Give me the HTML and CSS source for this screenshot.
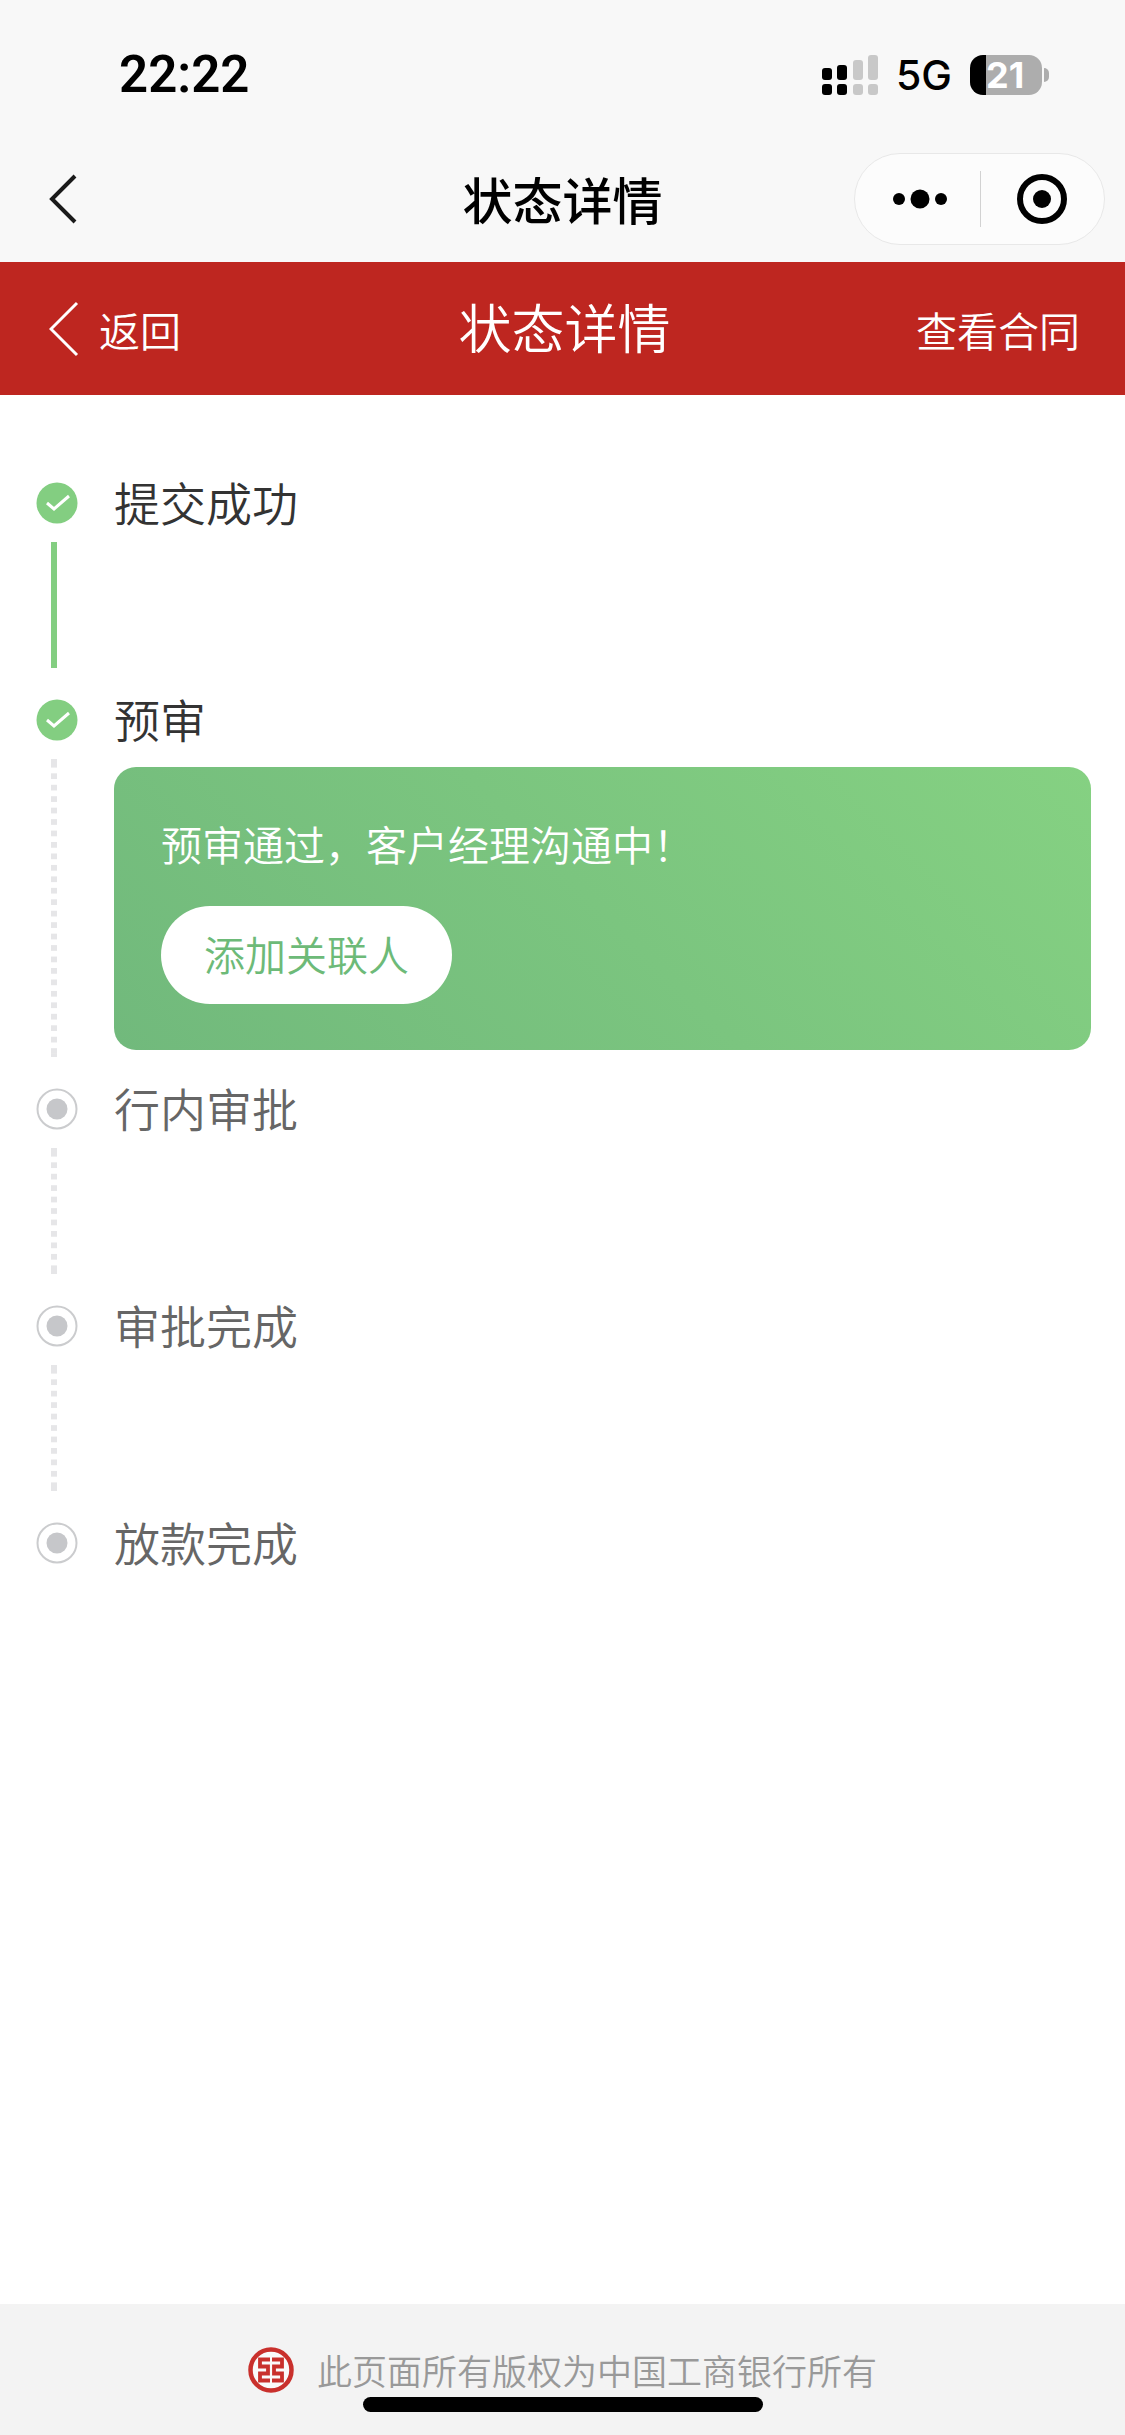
FILE: index.html
```html
<!DOCTYPE html>
<html lang="zh-CN">
<head>
<meta charset="utf-8">
<meta name="viewport" content="width=device-width, initial-scale=1">
<title>状态详情</title>
<link rel="stylesheet" href="styles.css">
</head>
<body>
<div class="status-bar">
  <time class="clock">22:22</time>
  <div class="status-icons">
    <svg class="signal" width="56" height="40" viewBox="0 0 56 40" aria-hidden="true">
      <g fill="#000"><rect y="13" width="10" height="12" rx="3"/><rect x="15" y="10" width="10" height="15" rx="3"/><rect y="29" width="10" height="11" rx="3"/><rect x="15" y="29" width="10" height="11" rx="3"/></g>
      <g fill="#c8c8c8"><rect x="31" y="5" width="10" height="20" rx="3"/><rect x="46" width="10" height="25" rx="3"/><rect x="31" y="29" width="10" height="11" rx="3"/><rect x="46" y="29" width="10" height="11" rx="3"/></g>
    </svg>
    <span class="network">5G</span>
    <div class="battery"><span class="battery-body">21</span><span class="battery-cap"></span></div>
  </div>
</div>
<header class="nav-bar">
  <button class="nav-back" type="button" aria-label="返回"><svg width="30" height="52" viewBox="0 0 30 52"><path d="M27 3 4 26l23 23" fill="none" stroke="#1a1a1a" stroke-width="4"/></svg></button>
  <div class="nav-title">状态详情</div>
  <div class="capsule">
    <button class="capsule-button" type="button" aria-label="更多"><svg width="56" height="20" viewBox="0 0 56 20"><circle cx="7" cy="10" r="6"/><circle cx="28" cy="10" r="9.5"/><circle cx="49" cy="10" r="6"/></svg></button>
    <button class="capsule-button" type="button" aria-label="关闭"><svg width="50" height="50" viewBox="0 0 50 50"><circle cx="25" cy="25" r="22" fill="none" stroke="#000" stroke-width="6"/><circle cx="25" cy="25" r="9"/></svg></button>
  </div>
</header>
<div class="page-bar">
  <a class="page-back" href="#"><svg width="30" height="56" viewBox="0 0 30 56" aria-hidden="true"><path d="M28 2 2 28l26 26" fill="none" stroke="#fff" stroke-width="3"/></svg>返回</a>
  <h1 class="page-title">状态详情</h1>
  <a class="page-link" href="#">查看合同</a>
</div>
<main class="content">
  <ol class="steps">
    <li class="step done">
      <div class="step-head">
        <svg class="mark" viewBox="0 0 42 42" aria-hidden="true"><circle cx="21" cy="21" r="20.5" fill="#83ce81"/><path d="m11 21 7 6L33 14" fill="none" stroke="#fff" stroke-width="3"/></svg>
        <h2 class="step-title">提交成功</h2>
      </div>
      <div class="step-body"></div>
    </li>
    <li class="step current">
      <div class="step-head">
        <svg class="mark" viewBox="0 0 42 42" aria-hidden="true"><circle cx="21" cy="21" r="20.5" fill="#83ce81"/><path d="m11 21 7 6L33 14" fill="none" stroke="#fff" stroke-width="3"/></svg>
        <h2 class="step-title">预审</h2>
      </div>
      <div class="step-body">
        <section class="card">
          <p class="card-text">预审通过，客户经理沟通中！</p>
          <button class="card-button" type="button">添加关联人</button>
        </section>
      </div>
    </li>
    <li class="step">
      <div class="step-head">
        <svg class="mark" viewBox="0 0 42 42" aria-hidden="true"><circle cx="21" cy="21" r="19.5" fill="none" stroke="#cbccce" stroke-width="2"/><circle cx="21" cy="21" r="10.5" fill="#c6c7ca"/></svg>
        <h2 class="step-title">行内审批</h2>
      </div>
      <div class="step-body"></div>
    </li>
    <li class="step">
      <div class="step-head">
        <svg class="mark" viewBox="0 0 42 42" aria-hidden="true"><circle cx="21" cy="21" r="19.5" fill="none" stroke="#cbccce" stroke-width="2"/><circle cx="21" cy="21" r="10.5" fill="#c6c7ca"/></svg>
        <h2 class="step-title">审批完成</h2>
      </div>
      <div class="step-body"></div>
    </li>
    <li class="step">
      <div class="step-head">
        <svg class="mark" viewBox="0 0 42 42" aria-hidden="true"><circle cx="21" cy="21" r="19.5" fill="none" stroke="#cbccce" stroke-width="2"/><circle cx="21" cy="21" r="10.5" fill="#c6c7ca"/></svg>
        <h2 class="step-title">放款完成</h2>
      </div>
    </li>
  </ol>
</main>
<footer class="footer">
  <div class="copyright">
    <svg width="46" height="46" viewBox="0 0 46 46" aria-hidden="true"><circle cx="23" cy="23" r="20.5" fill="#fafafa" stroke="#c9302c" stroke-width="4.5"/><path d="M22 12.500H12v7h8v7h-8v7h10M24 12.500h10v7h-8v7h8v7H24" fill="none" stroke="#c9302c" stroke-width="3.800"/></svg>
    <span>此页面所有版权为中国工商银行所有</span>
  </div>
  <div class="home-indicator"></div>
</footer>
</body>
</html>
```
FILE: styles.css
```css
* { box-sizing: border-box; }

body {
  margin: 0;
  min-height: 100vh;
  display: flex;
  flex-direction: column;
  background: #fff;
  color: #333;
  font-family: "Noto Sans CJK SC", sans-serif;
  font-weight: 350;
}

button {
  margin: 0;
  padding: 0;
  border: 0;
  background: none;
  font: inherit;
  color: inherit;
}

a { color: inherit; text-decoration: none; }
h1, h2, p, ol { margin: 0; padding: 0; font-weight: inherit; }
ol { list-style: none; }
svg { display: block; flex: none; }

/* Phone status bar */
.status-bar {
  display: flex;
  justify-content: space-between;
  align-items: center;
  height: 150px;
  padding: 0 76px 0 119px;
  background: #f8f8f8;
  color: #000;
  font-family: Inter, sans-serif;
}
.clock { font-family: Roboto, sans-serif; font-size: 51px; font-weight: 600; line-height: 60px; }
.status-icons { display: flex; align-items: center; }
.network { margin: 0 18px; font-size: 41px; font-weight: 500; line-height: 48px; }
.battery { display: flex; align-items: center; gap: 2px; }
.battery-body {
  width: 72px;
  height: 40px;
  padding-left: 16px;
  border-radius: 13px;
  background: linear-gradient(90deg, #000 16px, #adadad 16px);
  color: #fff;
  font-size: 36px;
  font-weight: 700;
  line-height: 40px;
}
.battery-cap { width: 5px; height: 14px; border-radius: 0 7px 7px 0; background: #adadad; }

/* Mini-program navigation */
.nav-bar {
  display: grid;
  grid-template-columns: 1fr auto 1fr;
  align-items: center;
  height: 112px;
  padding: 0 20px 14px 48px;
  background: #f8f8f8;
  color: #000;
}
.nav-back { justify-self: start; }
.nav-title { margin-right: 28px; padding-bottom: 2px; font-size: 50px; font-weight: 500; line-height: 72px; }
.capsule {
  justify-self: end;
  display: grid;
  grid-template-columns: 1fr 1fr;
  width: 251px;
  height: 92px;
  padding: 17px 0;
  border: 1px solid #e8e8e8;
  border-radius: 46px;
  background: #fcfcfc;
}
.capsule-button { display: flex; align-items: center; justify-content: center; }
.capsule-button:first-child { padding-left: 6px; }
.capsule-button + .capsule-button { border-left: 1px solid #d2d2d2; }

/* Red page header */
.page-bar {
  display: grid;
  grid-template-columns: 1fr auto 1fr;
  align-items: center;
  height: 133px;
  padding: 0 45px 0 49px;
  background: #be2620;
  color: #fff;
  font-size: 41px;
  line-height: 60px;
}
.page-back { display: flex; align-items: center; gap: 20px; }
.page-title { font-size: 53px; line-height: 78px; padding-bottom: 6px; }
.page-link { justify-self: end; }

/* Progress steps */
.content { flex: 1; padding: 69px 34px 80px; }
.step-head { display: flex; align-items: center; gap: 36px; height: 78px; }
.mark { width: 42px; height: 42px; margin-left: 2px; }
.step-title { padding-bottom: 4px; font-size: 46px; line-height: 68px; color: #666; }
.done .step-title, .current .step-title { color: #333; }
.step-body {
  --dots: 11;
  --dot: #e6e6e8;
  min-height: 126px;
  margin: 0 0 13px 17px;
  padding-left: 63px;
  background:
    linear-gradient(var(--dot), var(--dot)) left top / 6px 3px no-repeat,
    linear-gradient(var(--dot), var(--dot)) left bottom / 6px 3px no-repeat,
    linear-gradient(transparent 25%, var(--dot) 25% 75%, transparent 75%) left top / 6px calc(100% / var(--dots)) repeat-y;
}
.done .step-body { background: linear-gradient(#83ce81, #83ce81) left top / 6px 100% no-repeat; }
.current .step-body { --dots: 26; padding-top: 8px; padding-bottom: 7px; }

.card {
  padding: 46px 47px 46px;
  border-radius: 22px;
  background: linear-gradient(45deg, #71b97c, #85d182);
  color: #fff;
  font-size: 41px;
  line-height: 60px;
}
.card-button {
  display: block;
  height: 98px;
  margin-top: 33px;
  padding: 0 43px 4px;
  border-radius: 49px;
  background: #fff;
  color: #6dba78;
}

/* Footer */
.footer {
  display: flex;
  flex-direction: column;
  align-items: center;
  padding: 39px 0 23px;
  background: #f3f3f3;
}
.copyright {
  display: flex;
  align-items: center;
  gap: 23px;
  height: 54px;
  color: #999;
  font-size: 35px;
  line-height: 52px;
}
.home-indicator { width: 400px; max-width: 60%; height: 15px; border-radius: 8px; background: #000; }
```
